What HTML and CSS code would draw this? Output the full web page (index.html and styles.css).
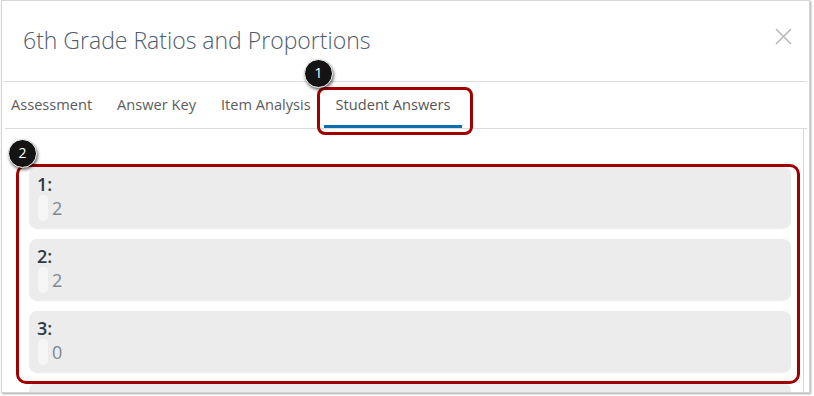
FILE: index.html
```html
<!DOCTYPE html>
<html lang="en">
<head>
  <meta charset="UTF-8" />
  <meta name="viewport" content="width=device-width, initial-scale=1.0" />
  <title>Student Answers</title>
  <link rel="stylesheet" href="styles.css">
</head>
<body>
  <div class="page">
    <div class="dialog">
      <div class="dialog-header">
        <h1 class="dialog-title">6th Grade Ratios and Proportions</h1>
        <span class="close-btn" title="Close">
          <svg width="17" height="17" viewBox="0 0 17 17"><path d="M1 1 L16 16 M16 1 L1 16" stroke="#b9b9b9" stroke-width="1.6" fill="none"/></svg>
        </span>
      </div>
      <ul class="tabs">
        <li><a href="#">Assessment</a></li>
        <li><a href="#">Answer Key</a></li>
        <li><a href="#">Item Analysis</a></li>
        <li class="active"><a href="#">Student Answers</a></li>
      </ul>
      <div class="answers">
        <div class="answer">
          <div class="answer-label">1:</div>
          <div class="answer-row"><span class="pill"></span><span class="answer-value">2</span></div>
        </div>
        <div class="answer">
          <div class="answer-label">2:</div>
          <div class="answer-row"><span class="pill"></span><span class="answer-value">2</span></div>
        </div>
        <div class="answer">
          <div class="answer-label">3:</div>
          <div class="answer-row"><span class="pill"></span><span class="answer-value">0</span></div>
        </div>
        <!-- next answer, scrolled out of view -->
        <div class="answer"></div>
      </div>
    </div>

    <!-- annotation callouts -->
    <div class="callout-box box-tab"></div>
    <div class="callout-box box-list"></div>
    <div class="callout-num num-1">1</div>
    <div class="callout-num num-2">2</div>
  </div>
</body>
</html>
```

FILE: styles.css
```css
body {
  margin: 0;
  background: #fff;
  font-family: "Open Sans", Arial, sans-serif;
}
.page {
  position: relative;
  width: 814px;
  height: 396px;
}
.dialog {
  margin-left: 1px;
  width: 809px;
  height: 393px;
  box-sizing: border-box;
  border: 1px solid #d4d4d4;
  box-shadow: 1px 1px 2px rgba(0, 0, 0, 0.35);
  background: #fff;
  overflow: hidden;
  display: flex;
  flex-direction: column;
}
.dialog-header {
  flex-shrink: 0;
  height: 81px;
  box-sizing: border-box;
  padding: 23px 15px 0 20px;
  margin: 0 2px 0 1px;
  border-bottom: 1px solid #dcdcdc;
  display: flex;
  justify-content: space-between;
  align-items: flex-start;
}
.dialog-title {
  margin: 0;
  font-size: 23px;
  line-height: 32px;
  font-weight: 300;
  color: #4f5d6b;
}
.close-btn {
  margin-top: 4px;
  cursor: pointer;
  line-height: 0;
}
.tabs {
  flex-shrink: 0;
  list-style-type: none;
  margin: 0 2px 0 3px;
  padding: 0 0 0 6px;
  height: 47px;
  box-sizing: border-box;
  border-bottom: 1px solid #dcdcdc;
  display: flex;
  gap: 25px;
}
.tabs li {
  position: relative;
  padding-top: 11px;
}
.tabs li a {
  font-size: 14.6px;
  line-height: 20px;
  color: #5b5b5b;
  text-decoration: none;
}
.tabs li.active a {
  color: #555;
}
.tabs li.active::after {
  content: "";
  position: absolute;
  left: -12px;
  right: -12px;
  bottom: 0;
  height: 3px;
  background: #0a6fb0;
}
.answers {
  flex: 1;
  margin: 0 5px 0 3px;
  padding: 38px 12px 0 24px;
  border-right: 1px solid #d8d8d8;
  overflow: hidden;
  display: flex;
  flex-direction: column;
  gap: 10px;
}
.answer {
  flex-shrink: 0;
  height: 62px;
  box-sizing: border-box;
  padding: 7px 10px 0 8px;
  background: #ececec;
  border-radius: 8px;
}
.answer-label {
  font-size: 18px;
  line-height: 21px;
  font-weight: 600;
  color: #2d3b45;
}
.answer-row {
  display: flex;
  align-items: center;
  gap: 4px;
  height: 26px;
}
.pill {
  width: 10px;
  height: 26px;
  margin-left: 1px;
  border-radius: 5px;
  background: #f6f6f6;
}
.answer-value {
  font-size: 18px;
  line-height: 26px;
  color: #7e8890;
}
.callout-box {
  position: absolute;
  box-sizing: border-box;
  border: 3px solid #a00000;
}
.box-tab {
  left: 317px;
  top: 87px;
  width: 156px;
  height: 48px;
  border-radius: 8px;
}
.box-list {
  left: 16px;
  top: 164px;
  width: 784px;
  height: 220px;
  border-radius: 10px;
}
.callout-num {
  position: absolute;
  width: 29px;
  height: 29px;
  box-sizing: border-box;
  border: 1.5px solid #fff;
  border-radius: 50%;
  background: #141414;
  box-shadow: 1px 2px 3px rgba(0, 0, 0, 0.55);
  color: #fff;
  font-size: 14px;
  line-height: 26px;
  text-align: center;
}
.num-1 {
  left: 304px;
  top: 59px;
}
.num-2 {
  left: 8px;
  top: 139px;
}
```
